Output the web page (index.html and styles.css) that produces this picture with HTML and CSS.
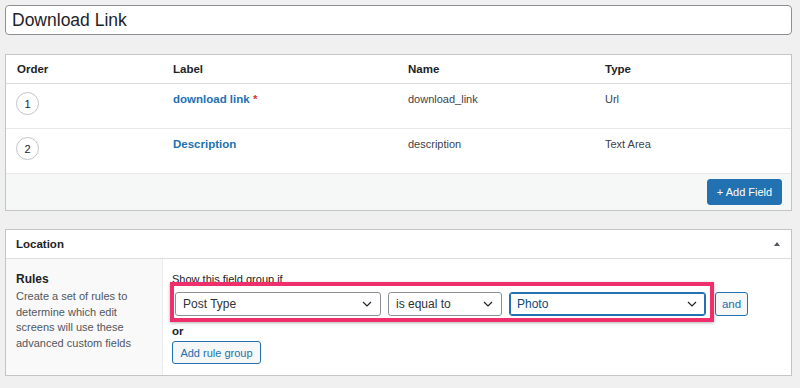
FILE: index.html
```html
<!DOCTYPE html>
<html lang="en">
<head>
  <meta charset="UTF-8" />
  <meta name="viewport" content="width=device-width, initial-scale=1.0" />
  <title>Edit Field Group – Download Link</title>
  <link rel="stylesheet" href="styles.css">
</head>
<body>

  <div class="page">
    <div class="title-input">Download Link</div>

    <div class="panel fields">
      <div class="field-grid field-head">
        <span>Order</span>
        <span>Label</span>
        <span>Name</span>
        <span>Type</span>
      </div>
      <div class="field-grid field-row">
        <span class="order"><span class="order-num">1</span></span>
        <a class="field-label" href="#">download link <span class="req">*</span></a>
        <span class="field-meta">download_link</span>
        <span class="field-meta">Url</span>
      </div>
      <div class="field-grid field-row">
        <span class="order"><span class="order-num">2</span></span>
        <a class="field-label" href="#">Description</a>
        <span class="field-meta">description</span>
        <span class="field-meta">Text Area</span>
      </div>
      <div class="field-foot">
        <button class="btn-primary">+ Add Field</button>
      </div>
    </div>

    <div class="panel location">
      <div class="panel-head">
        <h2>Location</h2>
        <svg class="toggle" width="6" height="4" viewBox="0 0 6 4"><path d="M3 0 L6 4 L0 4 Z" fill="#50575e"/></svg>
      </div>
      <div class="location-body">
        <div class="rules-label">
          <h3>Rules</h3>
          <p>Create a set of rules to determine which edit screens will use these advanced custom fields</p>
        </div>
        <div class="rules-input">
          <p class="rules-title">Show this field group if</p>
          <div class="rule-row">
            <div class="select select-param">
              <span>Post Type</span>
              <svg width="10" height="6" viewBox="0 0 10 6"><path d="M1 1 L5 5 L9 1" fill="none" stroke="#1d2327" stroke-width="1.2"/></svg>
            </div>
            <div class="select select-op">
              <span>is equal to</span>
              <svg width="10" height="6" viewBox="0 0 10 6"><path d="M1 1 L5 5 L9 1" fill="none" stroke="#1d2327" stroke-width="1.2"/></svg>
            </div>
            <div class="select select-value">
              <span>Photo</span>
              <svg width="10" height="6" viewBox="0 0 10 6"><path d="M1 1 L5 5 L9 1" fill="none" stroke="#1d2327" stroke-width="1.2"/></svg>
            </div>
            <button class="btn-secondary btn-and">and</button>
            <span class="highlight"></span>
          </div>
          <p class="or">or</p>
          <button class="btn-secondary btn-group">Add rule group</button>
        </div>
      </div>
    </div>
  </div>

</body>
</html>
```

FILE: styles.css
```css
body {
  margin: 0;
  background-color: #f0f0f1;
  font-family: 'Liberation Sans', Arial, sans-serif;
  color: #1d2327;
  font-size: 11px;
}

.page {
  padding: 5px 8px 5px 5px;
}

.title-input {
  height: 30px;
  box-sizing: border-box;
  border: 1px solid #8c8f94;
  border-radius: 4px;
  background: white;
  padding: 0 6px;
  display: flex;
  align-items: center;
  font-size: 17.5px;
  color: #1d2327;
}

.panel {
  background: white;
  border: 1px solid #c3c4c7;
  margin-top: 19px;
}

.panel.location {
  margin-top: 18px;
}

/* field list */

.field-grid {
  display: grid;
  grid-template-columns: 156px 235px 197px 1fr;
  padding-left: 11px;
}

.field-head {
  height: 28px;
  align-items: center;
  border-bottom: 1px solid #dcdcde;
  font-weight: bold;
  font-size: 11.5px;
}

.field-row {
  height: 44px;
  align-items: start;
  border-bottom: 1px solid #e8e8e9;
  line-height: 16px;
}

.field-row > span,
.field-row > a {
  padding-top: 7px;
}

.field-row .order {
  padding-top: 8px;
}

.order-num {
  display: flex;
  align-items: center;
  justify-content: center;
  width: 23px;
  height: 23px;
  box-sizing: border-box;
  border: 1px solid #c3c4c7;
  border-radius: 50%;
  margin-left: -1px;
  font-size: 11px;
  color: #1d2327;
}

.field-label {
  color: #2271b1;
  font-weight: bold;
  font-size: 11.5px;
  text-decoration: none;
}

.req {
  color: #d63638;
}

.field-meta {
  color: #3c434a;
}

.field-foot {
  height: 36px;
  background-color: #f6f7f7;
  display: flex;
  justify-content: flex-end;
  align-items: center;
  padding: 0 9px;
}

.btn-primary {
  height: 26px;
  width: 75px;
  background-color: #2271b1;
  border: 1px solid #2271b1;
  border-radius: 3px;
  color: white;
  font-family: inherit;
  font-size: 11px;
  padding: 0;
  cursor: pointer;
}

/* location */

.panel-head {
  height: 28px;
  border-bottom: 1px solid #dcdcde;
  display: flex;
  align-items: center;
  justify-content: space-between;
  padding: 0 10px;
}

.panel-head h2 {
  margin: 0;
  font-size: 11.5px;
  font-weight: bold;
}

.toggle {
  margin-right: 1px;
}

.location-body {
  display: flex;
  height: 116px;
}

.rules-label {
  width: 122px;
  flex-shrink: 0;
  background-color: #f9f9f9;
  border-right: 1px solid #ebebeb;
  padding: 12px 24px 0 10px;
}

.rules-label h3 {
  margin: 0;
  font-size: 12px;
  line-height: 16px;
  font-weight: bold;
}

.rules-label p {
  margin: 2px 0 0 0;
  line-height: 15.7px;
  color: #50575e;
  font-size: 11px;
}

.rules-input {
  flex: 1;
  padding: 12px 0 0 9px;
}

.rules-title {
  margin: 0;
  line-height: 16px;
}

.rule-row {
  position: relative;
  display: flex;
  align-items: center;
  margin-top: 5px;
  padding-left: 3px;
  height: 24px;
}

.select {
  height: 24px;
  box-sizing: border-box;
  border: 1px solid #8c8f94;
  border-radius: 3px;
  display: flex;
  align-items: center;
  justify-content: space-between;
  padding: 0 8px 0 7px;
  font-size: 12px;
  color: #2c3338;
  background: white;
}

.select-param {
  width: 206px;
}

.select-op {
  width: 114px;
  margin-left: 7px;
}

.select-value {
  width: 197px;
  margin-left: 7px;
  border-color: #2271b1;
  box-shadow: 0 0 0 1px #2271b1 inset;
  color: #0a4b78;
}

.btn-secondary {
  background-color: #f6f7f7;
  border: 1px solid #2271b1;
  border-radius: 3px;
  color: #2271b1;
  font-family: inherit;
  font-size: 11px;
  padding: 0;
  cursor: pointer;
}

.btn-and {
  width: 33px;
  height: 24px;
  margin-left: 9px;
  font-size: 11.5px;
}

.highlight {
  position: absolute;
  left: -2px;
  top: -10px;
  width: 544px;
  height: 40px;
  box-sizing: border-box;
  border: 4px solid #ee2f6c;
  box-shadow: 0 1px 3px rgba(0,0,0,0.3);
  pointer-events: none;
}

.or {
  margin: 7px 0 0 0;
  line-height: 16px;
  font-weight: bold;
  font-size: 11.5px;
}

.btn-group {
  margin-top: 2px;
  width: 89px;
  height: 23px;
}
```
